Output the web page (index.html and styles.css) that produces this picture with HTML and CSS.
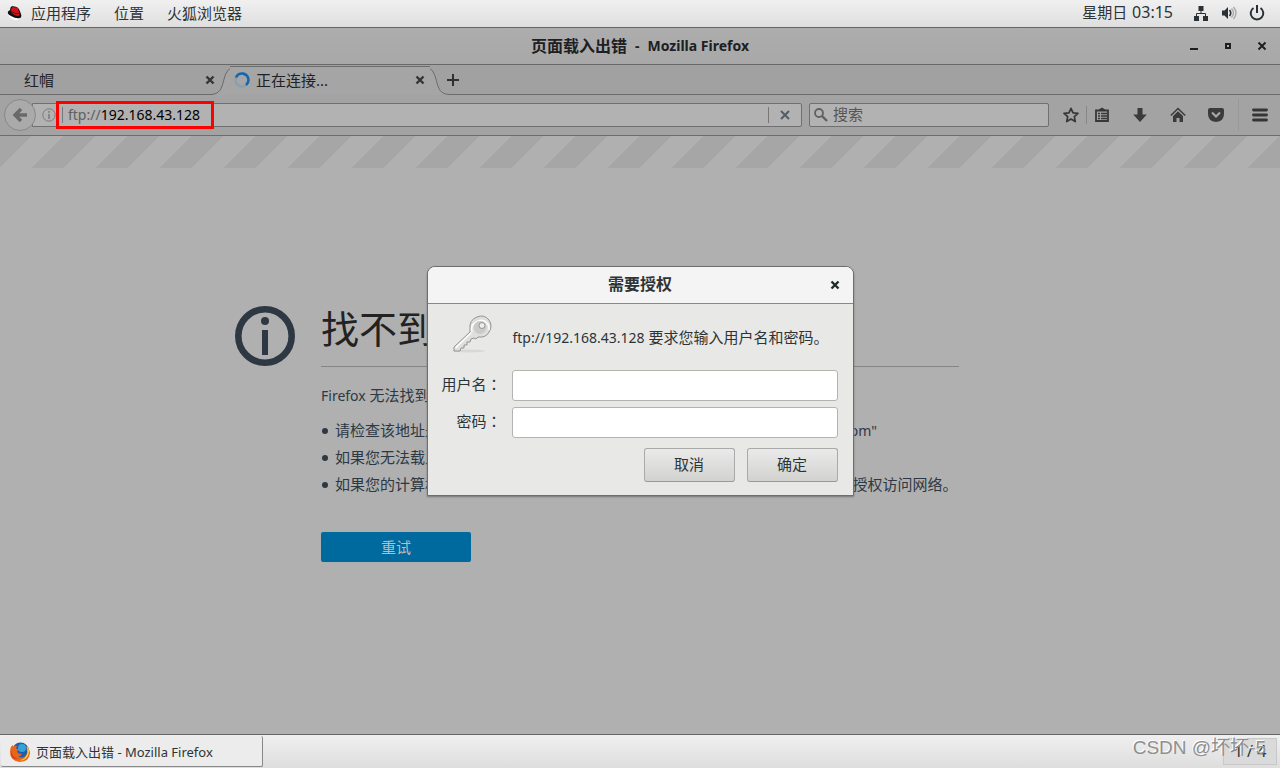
FILE: index.html
```html
<!DOCTYPE html>
<html lang="zh-CN">
<head>
<meta charset="utf-8">
<title>页面载入出错 - Mozilla Firefox</title>
<link rel="stylesheet" href="styles.css">
</head>
<body>
<div class="desktop">
  <header class="panel">
    <nav class="panel-menu">
      <button class="panel-item" type="button">
        <svg class="hat" width="16" height="16" viewBox="0 0 16 16"><path d="M1 8q1 6 8 7 3 0 4-2l1-3z" fill="#fff"/><path d="M1 6.500Q0 9 4 11q5 3 9 2 2-1 1-4l-2-5Q10 1 7 1.500L5 1Q3 2 3 5z" fill="#111"/><path d="M3.500 6 5 2.300q1-.8 2 .1 4-.8 4.500 2.500l1 4Q13 11 11 11 6 10.500 3.500 6z" fill="#d2121b"/><path d="M4 6q4 3.500 8 2.500" fill="none" stroke="#222" stroke-width=".9"/></svg>
        应用程序</button>
      <button class="panel-item" type="button">位置</button>
      <button class="panel-item" type="button">火狐浏览器</button>
    </nav>
    <div class="status">
      <time class="clock">星期日 <span class="clock-digits">03:15</span></time>
      <svg width="16" height="16" viewBox="0 0 16 16" fill="#2a3033"><path d="M5.500 1h5v5h-5zM1 11h5v5H1zM10 11h5v5h-5z"/><path d="M8 6v3M3.500 11V8.500h9V11" fill="none" stroke="#2a3033"/></svg>
      <svg width="16" height="16" viewBox="0 0 16 16"><path d="M1 5.500h2.500L7 2v12l-3.500-3.500H1z" fill="#2a3033"/><path d="M8.500 5q2.500 3 0 6" fill="none" stroke="#2a3033" stroke-width="1.600"/><path d="M10.500 3.500q4 4.500 0 9M12.500 2q5 6 0 12" fill="none" stroke="#aaa" stroke-width="1.400"/></svg>
      <svg width="16" height="16" viewBox="0 0 16 16" fill="none" stroke="#2a3033" stroke-width="2"><path d="M4.500 3a6.300 6.300 0 1 0 7 0M8 0v8"/></svg>
    </div>
  </header>

  <section class="window">
    <div class="titlebar">
      <h1 class="window-title"><span class="title-page">页面载入出错</span><span>-</span><span>Mozilla Firefox</span></h1>
      <div class="window-buttons">
        <button type="button" aria-label="最小化"><svg width="10" height="10" viewBox="0 0 10 10"><path d="M1 8h8" stroke="#1d2022" stroke-width="2"/></svg></button>
        <button type="button" aria-label="最大化"><svg width="10" height="10" viewBox="0 0 10 10"><path d="M3 3h4v4H3z" fill="none" stroke="#1d2022" stroke-width="2"/></svg></button>
        <button type="button" aria-label="关闭窗口"><svg width="10" height="10" viewBox="0 0 10 10"><path d="m1.500 1.500 7 7m0-7-7 7" stroke="#1d2022" stroke-width="2"/></svg></button>
      </div>
    </div>

    <div class="tabs">
      <div class="tab">
        <span class="tab-label">红帽</span>
        <button type="button" aria-label="关闭标签页"><svg width="10" height="10" viewBox="0 0 10 10"><path d="m1.500 1.500 7 7m0-7-7 7" stroke="#303538" stroke-width="2.400"/></svg></button>
      </div>
      <svg class="curve-left" width="28" height="30" viewBox="0 0 28 30"><path d="M0 29.500C20 30 7 1.500 28 1.500V30H0z" fill="#a5a5a5"/><path d="M0 29.500C20 30 7 1.500 28 1.500" fill="none" stroke="#6b6b6b"/></svg>
      <div class="tab tab-active">
        <svg width="16" height="16" viewBox="0 0 16 16" fill="none" stroke-width="2.600"><circle cx="8" cy="8" r="6.500" stroke="#8ba0ae"/><path d="M2 5.500A6.500 6.500 0 0 1 14.500 8q0 3-2.500 5" stroke="#1268b0"/></svg>
        <span class="tab-label">正在连接...</span>
        <button type="button" aria-label="关闭标签页"><svg width="10" height="10" viewBox="0 0 10 10"><path d="m1.500 1.500 7 7m0-7-7 7" stroke="#303538" stroke-width="2.400"/></svg></button>
      </div>
      <svg class="curve-right" width="28" height="30" viewBox="0 0 28 30"><path d="M0 1.500C21 1.500 8 30 28 29.500V30H0z" fill="#a5a5a5"/><path d="M0 1.500C21 1.500 8 30 28 29.500" fill="none" stroke="#6b6b6b"/></svg>
      <div class="tabs-rest"><button class="new-tab" type="button" aria-label="新建标签页"><svg width="12" height="12" viewBox="0 0 12 12"><path d="M6 0v12M0 6h12" stroke="#303030" stroke-width="2"/></svg></button></div>
    </div>

    <div class="toolbar">
      <button class="back" type="button" aria-label="后退"><svg width="16" height="16" viewBox="0 0 16 16" fill="none" stroke="#696969" stroke-width="3.400"><path d="M9 2 3 8l6 6M3 8h12"/></svg></button>
      <div class="urlbar">
        <svg width="14" height="14" viewBox="0 0 14 14" fill="none" stroke="#7c7c7c"><circle cx="7" cy="7" r="6.200"/><path d="M7 6v5M7 3v1.700" stroke-width="1.600"/></svg>
        <label class="scheme" for="url">ftp://</label>
        <input class="url" id="url" type="text" value="192.168.43.128">
        <button class="stop" type="button" aria-label="停止"><svg width="10" height="10" viewBox="0 0 10 10"><path d="m1 1 8 8m0-8-8 8" stroke="#535d69" stroke-width="2"/></svg></button>
        <span class="highlight"></span>
      </div>
      <div class="search">
        <svg width="14" height="14" viewBox="0 0 14 14" fill="none" stroke="#616161"><circle cx="5" cy="5" r="4" stroke-width="1.800"/><path d="m8 8 5 5" stroke-width="2.400"/></svg>
        <input class="search-input" type="text" placeholder="搜索" aria-label="搜索">
      </div>
      <div class="tools">
        <div class="tool-pair">
          <button type="button" aria-label="收藏"><svg width="16" height="16" viewBox="0 0 16 16"><path d="m8 1.300 2 4.500 5 .5-3.700 3.300 1 5L8 12l-4.300 2.600 1-5L1 6.300l5-.5z" fill="none" stroke="#373737" stroke-width="1.700" stroke-linejoin="round"/></svg></button>
          <button class="tool-split" type="button" aria-label="书签"><svg width="16" height="16" viewBox="0 0 16 16" fill="none" stroke="#373737"><path d="M2 3.500h12v10.500H2z" stroke-width="1.800"/><path d="m5 3 3-2 3 2z" fill="#373737"/><path d="M4 6.500h2m1 0h6M4 9h2m1 0h6m-9 2.500h2m1 0h6" stroke-width="1.300"/></svg></button>
        </div>
        <button type="button" aria-label="下载"><svg width="16" height="16" viewBox="0 0 16 16"><path d="M5.500 1h5v6.500h4.300L8 15 1.200 7.500h4.300z" fill="#3b3b3b"/></svg></button>
        <button type="button" aria-label="主页"><svg width="16" height="16" viewBox="0 0 16 16"><path d="m.8 8.500 7.200-7 7.200 7" fill="none" stroke="#3b3b3b" stroke-width="1.500"/><path d="m3 9 5-4.800L13 9v6H9.500v-4h-3v4H3z" fill="#3b3b3b"/></svg></button>
        <button type="button" aria-label="Pocket"><svg width="16" height="16" viewBox="0 0 16 16"><path d="M0 3q0-2 2-2h12q2 0 2 2v4q0 7-8 8Q0 14 0 7z" fill="#3b3b3b"/><path d="m4 5.500 4 4 4-4" fill="none" stroke="#aaa" stroke-width="2"/></svg></button>
        <button class="menu" type="button" aria-label="打开菜单"><svg width="16" height="16" viewBox="0 0 16 16"><path d="M1.500 3h13M1.500 8h13M1.500 13h13" stroke="#353535" stroke-width="2.800" stroke-linecap="round"/></svg></button>
      </div>
    </div>

    <main class="page">
      <div class="stripes"></div>
      <div class="error">
        <svg width="60" height="60" viewBox="0 0 60 60"><circle cx="30" cy="30" r="26.700" fill="none" stroke="#2d3843" stroke-width="6.600"/><circle cx="30" cy="15" r="4" fill="#2d3843"/><path d="M27 24h6v25h-6z" fill="#2d3843"/></svg>
        <div class="error-body">
          <h2 class="error-title">找不到服务器</h2>
          <p class="error-text"><span class="latin">Firefox</span> 无法找到服务器。</p>
          <ul class="error-list">
            <li>请检查该地址是否输入错误，比如将 <span class="latin">"www.example.com"</span> 写成 <span class="latin">"ww.example.com"</span></li>
            <li>如果您无法载入任何页面，请检查网络连接。</li>
            <li>如果您的计算机或网络受到防火墙或者代理服务器的保护，请确认 <span class="latin">Firefox</span> 已被授权访问网络。</li>
          </ul>
          <button class="retry" type="button">重试</button>
        </div>
      </div>
    </main>
  </section>

  <footer class="taskbar">
    <button class="task" type="button">
      <svg width="20" height="20" viewBox="0 0 20 20"><circle cx="10.500" cy="9" r="8.500" fill="#1d5fae"/><circle cx="12" cy="6" r="4" fill="#35a2d8"/><path d="M1 5 2.500 3l.8 1.500Q5 3.500 7 4L6 6.500l3 1-2 2q1 3 5 2-1 3-4 3 6 3 9-3 1-4-2-8 5 3 5 8-1 8-10 8.500Q0 19 0 10q0-3 1-5z" fill="#e8661b"/><path d="M17 4q3 4 1.500 8.500-2 6-9 6 7-2 8-8z" fill="#f8d33a"/><path d="M1 8q0 7 7 9-6 0-7-5z" fill="#c92b1a"/></svg>
      页面载入出错 - Mozilla Firefox</button>
    <div class="pager">1 / 4</div>
    <span class="watermark">CSDN @坏坏-5</span>
  </footer>
</div>

<div class="overlay">
  <form class="dialog" role="dialog" aria-labelledby="dialog-title">
    <div class="dialog-head">
      <h2 class="dialog-title" id="dialog-title">需要授权</h2>
      <button class="dialog-close" type="button" aria-label="关闭"><svg width="10" height="10" viewBox="0 0 10 10"><path d="m1.500 1.500 7 7m0-7-7 7" stroke="#24292b" stroke-width="2.400"/></svg></button>
    </div>
    <div class="dialog-body">
      <div class="message">
        <svg width="42" height="40" viewBox="0 0 42 40"><ellipse cx="18" cy="36" rx="16" ry="1.500" fill="#d8d8d5"/><path d="M19 17 3 32v4h6l1-3h3v-3h3v-3h3l1-3 3-1 2 1 2-2q8 1 11-5 4-6 0-12-5-6-12-3-8 3-7 12z" fill="#dfe0dc" stroke="#92948f"/><path d="M20 18 4.500 33M21 17q-2-6 3-9 6-5 11-1 4 4 3 8" fill="none" stroke="#fff" stroke-width="1.500"/><circle cx="29" cy="12.500" r="6.500" fill="#c9cbc6"/><circle cx="31" cy="10.500" r="3" fill="#eeeeec" stroke="#92948f"/></svg>
        <p class="message-text"><span class="latin">ftp://192.168.43.128</span> 要求您输入用户名和密码。</p>
      </div>
      <div class="fields">
        <label for="user">用户名<span class="colon" lang="zh-TW">：</span></label><input id="user" type="text">
        <label for="pass">密码<span class="colon" lang="zh-TW">：</span></label><input id="pass" type="password">
      </div>
      <div class="actions">
        <button type="button">取消</button>
        <button type="submit">确定</button>
      </div>
    </div>
  </form>
</div>
</body>
</html>
```

FILE: styles.css
```css
* { box-sizing: border-box; }

body {
  margin: 0;
  font-family: "Noto Sans", "Noto Sans CJK SC", sans-serif;
  font-size: 15px;
  line-height: 20px;
  color: #2e3436;
}

h1, h2, p, ul { margin: 0; }

button, input { font: inherit; color: inherit; }

button {
  display: flex;
  align-items: center;
  justify-content: center;
  padding: 0;
  border: 0;
  background: none;
}

input { min-width: 0; outline: 0; }

svg { flex: none; display: block; }

.latin { font-size: 14px; line-height: 14px; }

.desktop {
  display: flex;
  flex-direction: column;
  min-height: 100vh;
  overflow: hidden;
}

/* Top panel */
.panel {
  display: flex;
  justify-content: space-between;
  align-items: center;
  height: 28px;
  padding: 0 15px 2px 7px;
  background: linear-gradient(#f0f0f0, #dfdfdf);
  border-bottom: 1px solid #666;
}

.panel-menu { display: flex; gap: 23px; }
.panel-item { gap: 8px; }
.status { display: flex; align-items: center; gap: 12px; }
.clock { margin-right: 8px; padding-bottom: 1px; }
.clock-digits { margin-left: 1px; font-size: 16px; }

/* Browser window */
.window {
  flex: 1;
  display: flex;
  flex-direction: column;
  background: #b0b0b0;
}

.titlebar {
  display: grid;
  grid-template-columns: 1fr auto 1fr;
  align-items: center;
  height: 37px;
  padding: 0 13px;
  background: linear-gradient(#adadad, #a8a8a8);
  border-bottom: 1px solid #686868;
}

.window-title {
  grid-column: 2;
  display: flex;
  gap: 8px;
  align-items: center;
  font-size: 14px;
  font-weight: bold;
  color: #1d2022;
}

.title-page { font-size: 16px; }

.window-buttons {
  display: flex;
  justify-content: flex-end;
  gap: 24px;
}

.tabs {
  display: flex;
  height: 30px;
  background: #a1a1a1;
}

.tab {
  display: flex;
  align-items: center;
  gap: 6px;
  width: 215px;
  padding-left: 24px;
  border-bottom: 1px solid #6b6b6b;
  color: #1f2224;
}

.tab-label { flex: 1; text-align: left; }

.tab-active {
  position: relative;
  z-index: 1;
  width: 200px;
  margin-top: 1px;
  padding: 0 5px 2px 4px;
  background: #a5a5a5;
  border-top: 1px solid #6b6b6b;
  border-bottom: 0;
}

.curve-left { margin-right: -8px; margin-left: -5px; }
.curve-right { margin-left: -8px; }

.tabs-rest {
  flex: 1;
  display: flex;
  align-items: center;
  border-bottom: 1px solid #6b6b6b;
}

.new-tab { z-index: 1; margin-left: -3px; }

.toolbar {
  display: flex;
  align-items: center;
  height: 41px;
  padding-left: 4px;
  background: #a3a3a3;
  border-bottom: 1px solid #6d6d6d;
}

.back {
  z-index: 1;
  width: 32px;
  height: 32px;
  background: #aaa;
  border: 1px solid #888;
  border-radius: 50%;
}

.urlbar {
  position: relative;
  flex: 1;
  display: flex;
  align-items: center;
  height: 24px;
  margin-left: -4px;
  padding-left: 9px;
  background: #b2b2b2;
  border: 1px solid #707070;
  border-radius: 0 2px 2px 0;
  font-size: 14px;
}

.scheme {
  margin-left: 6px;
  padding-left: 5px;
  border-left: 1px solid #777;
  line-height: 16px;
  color: #606060;
}

.url {
  flex: 1;
  padding: 0;
  border: 0;
  background: none;
  color: #000;
}

.stop {
  width: 33px;
  height: 16px;
  border-left: 1px solid #777;
}

/* Red marker drawn around the address */
.highlight {
  position: absolute;
  top: -3px;
  left: 23px;
  width: 158px;
  height: 28px;
  border: 3px solid #f00;
}

.search {
  display: flex;
  align-items: center;
  gap: 5px;
  width: 240px;
  height: 24px;
  margin: 0 7px;
  padding-left: 4px;
  background: #b2b2b2;
  border: 1px solid #707070;
  border-radius: 2px;
}

.search-input {
  flex: 1;
  padding: 0 0 2px;
  border: 0;
  background: none;
}

.search-input::placeholder { color: #555; opacity: 1; }

.tools { display: flex; gap: 8px; }
.tool-pair { display: flex; }
.tools button { width: 30px; height: 18px; }
.tools .tool-split { width: 31px; border-left: 1px solid #888; }
.tools .menu {
  width: 42px;
  height: 32px;
  margin: -7px 0 -7px -1px;
  border-left: 1px solid #989898;
}

/* Error page */
.page { flex: 1; }

.stripes {
  height: 32px;
  background: linear-gradient(135deg, #a6a6a6 0 33.33%, #b0b0b0 33.33% 66.66%, #a6a6a6 66.66%) 0 0 / 64px 32px;
}

.error {
  display: grid;
  grid-template-columns: 60px 1fr;
  gap: 26px;
  max-width: 810px;
  margin: 0 auto;
  padding: 138px 86px 0 0;
}

.error-body { color: #2d3843; }

.error-title {
  padding-bottom: 16px;
  border-bottom: 1px solid #858585;
  font-size: 38px;
  line-height: 44px;
  font-weight: normal;
  color: #222;
}

.error-text { margin-top: 18px; }

.error-list {
  display: grid;
  gap: 7px;
  margin: 15px 0 38px;
  padding-left: 14px;
  white-space: nowrap;
}

.error-list li { height: 20px; list-style: none; }

.error-list li::before {
  content: "";
  display: inline-block;
  width: 6px;
  height: 6px;
  margin: 0 7px 0 -13px;
  border-radius: 50%;
  background: #2d3843;
  vertical-align: 2px;
}

.retry {
  width: 150px;
  height: 30px;
  background: #00699d;
  border-radius: 2px;
  color: #bcbcbc;
}

/* Bottom panel */
.taskbar {
  position: relative;
  display: flex;
  justify-content: space-between;
  height: 34px;
  padding: 1px 3px 1px 1px;
  background: linear-gradient(#efefef, #dedede);
  border-top: 1px solid #666;
}

.task {
  justify-content: flex-start;
  gap: 6px;
  width: 262px;
  padding: 1px 0 0 9px;
  background: #ececec;
  border-right: 1px solid #888;
  border-bottom: 1px solid #888;
  border-radius: 2px;
  font-size: 13px;
}

.pager {
  width: 54px;
  height: 27px;
  margin-top: 2px;
  background: #dadada;
  border: 1px solid #c8c8c8;
  text-align: center;
  line-height: 24px;
  font-size: 16px;
}

.watermark {
  position: absolute;
  top: 3px;
  right: 14px;
  font-family: "Liberation Sans", "Noto Sans CJK SC", sans-serif;
  font-size: 19px;
  color: #8f8f8f;
  text-shadow: -1px -1px 0 #fff;
}

/* Authentication dialog */
.overlay {
  position: absolute;
  inset: 0 0 6px 0;
  display: grid;
  place-items: center;
}

.dialog {
  width: 427px;
  background: #e8e8e6;
  border: 1px solid #6e6e6e;
  border-radius: 8px 8px 0 0;
  box-shadow: 0 1px 2px #777;
}

.dialog-head {
  display: grid;
  grid-template-columns: 1fr auto 1fr;
  align-items: center;
  height: 37px;
  padding: 0 13px;
  background: #f4f4f4;
  border-bottom: 1px solid #888;
  border-radius: 7px 7px 0 0;
}

.dialog-title {
  grid-column: 2;
  padding-bottom: 2px;
  font-size: 16px;
  line-height: 20px;
}

.dialog-close { justify-self: end; }

.dialog-body { padding: 10px 15px 13px 14px; }

.message {
  display: flex;
  align-items: center;
  gap: 20px;
  padding-left: 9px;
  height: 42px;
}

.message-text { padding-top: 4px; white-space: nowrap; }

.fields {
  display: grid;
  grid-template-columns: 60px 1fr;
  align-items: center;
  gap: 6px 10px;
  margin-top: 14px;
}

.fields label {
  padding-bottom: 4px;
  text-align: right;
  white-space: nowrap;
}

.colon { font-family: "Noto Sans CJK TC", sans-serif; }

.fields input {
  height: 31px;
  padding: 0 8px;
  background: #fff;
  border: 1px solid #b3b3b0;
  border-radius: 3px;
}

.actions {
  display: flex;
  justify-content: flex-end;
  gap: 12px;
  margin-top: 10px;
}

.actions button {
  width: 91px;
  height: 34px;
  padding-bottom: 2px;
  background: linear-gradient(#eaeaea, #d2d2d0);
  border: 1px solid #aaa;
  border-bottom-color: #999;
  border-radius: 3px;
}
```
